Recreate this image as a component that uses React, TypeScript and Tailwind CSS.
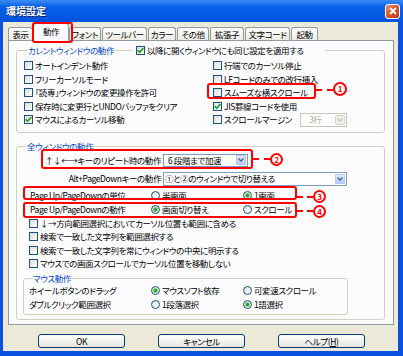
import React from "react";

function Check({ checked }: { checked?: boolean }) {
  return (
    <span className="w-[9px] h-[9px] shrink-0 border border-[#1C5180] bg-linear-to-br from-[#DCDCD7] to-white flex items-center justify-center">
      {checked && (
        <svg width="7" height="7" viewBox="0 0 7 7">
          <path d="M0.7 3.2 L2.6 5.3 L6.4 1.2" stroke="#21A121" strokeWidth="1.7" fill="none" />
        </svg>
      )}
    </span>
  );
}

function Radio({ checked }: { checked?: boolean }) {
  return (
    <span className="w-[9px] h-[9px] shrink-0 rounded-full border border-[#1C5180] bg-linear-to-br from-[#DCDCD7] to-white flex items-center justify-center">
      {checked && <span className="w-[3px] h-[3px] rounded-full bg-[#21A121] ring-1 ring-[#7FD07F]" />}
    </span>
  );
}

function CB({ checked, children }: { checked?: boolean; children: React.ReactNode }) {
  return (
    <div className="flex items-center gap-[2px] whitespace-nowrap">
      <Check checked={checked} />
      <span>{children}</span>
    </div>
  );
}

function RB({ checked, children }: { checked?: boolean; children: React.ReactNode }) {
  return (
    <div className="flex items-center gap-[2px] whitespace-nowrap">
      <Radio checked={checked} />
      <span>{children}</span>
    </div>
  );
}

function DropBtn({ disabled }: { disabled?: boolean }) {
  return (
    <span
      className={
        disabled
          ? "w-[10px] h-[10px] shrink-0 rounded-[1px] border border-[#D8D6CB] bg-[#F1EFE6] flex items-center justify-center"
          : "w-[10px] h-[10px] shrink-0 rounded-[1px] border border-[#B4C8F5] bg-linear-to-b from-[#E3ECFE] to-[#B2CBF8] flex items-center justify-center"
      }
    >
      <svg width="6" height="4" viewBox="0 0 6 4">
        <path d="M0.5 0.5 L3 3 L5.5 0.5" stroke={disabled ? "#C9C7BA" : "#4D6185"} strokeWidth="1.4" fill="none" />
      </svg>
    </span>
  );
}

function Tab({ w, children, selected }: { w: string; children: React.ReactNode; selected?: boolean }) {
  if (selected) {
    return (
      <div className={`${w} h-[18px] -mb-[1px] relative z-10 border border-b-0 border-[#919B9C] rounded-t-[3px] bg-[#FCFCFE] flex items-center justify-center pb-[2px] whitespace-nowrap`}>
        {children}
      </div>
    );
  }
  return (
    <div className={`${w} h-[13px] border border-b-0 border-[#919B9C] rounded-t-[3px] bg-linear-to-b from-white to-[#ECEBE6] flex items-center justify-center whitespace-nowrap`}>
      {children}
    </div>
  );
}

function XPButton({ children }: { children: React.ReactNode }) {
  return (
    <div className="w-[87px] h-[14px] rounded-[3px] border border-[#003C74] bg-linear-to-b from-white to-[#E6E5DE] flex items-center justify-center">
      {children}
    </div>
  );
}

function Circle({ n }: { n: string }) {
  return (
    <span className="w-full h-full rounded-full border-2 border-[#F00] bg-white flex items-center justify-center text-[#F00] font-bold text-[8px] leading-[8px] tracking-normal">
      {n}
    </span>
  );
}

export default function App() {
  return (
    <div className="relative w-[403px] h-[356px] flex flex-col bg-[#0A4FDF] font-['Noto_Sans_CJK_JP',sans-serif] text-[8.5px] leading-[9px] tracking-[-0.4px] text-black [font-feature-settings:'palt'] overflow-hidden">
      {/* Title bar */}
      <div className="h-[22px] shrink-0 flex items-center justify-between pl-[6px] pr-[3px] bg-linear-to-b from-[#3A8CF6] via-[#0861EA] via-30% to-[#0453DE]">
        <span className="text-white font-bold text-[10px] leading-[10px] tracking-normal [text-shadow:1px_1px_0_#0A1E6E]">環境設定</span>
        <span className="w-[15px] h-[15px] rounded-[3px] border border-white bg-linear-to-br from-[#E88A6A] via-[#D9532F] to-[#C13A18] flex items-center justify-center">
          <svg width="8" height="8" viewBox="0 0 8 8">
            <path d="M1 1 L7 7 M7 1 L1 7" stroke="white" strokeWidth="1.8" />
          </svg>
        </span>
      </div>

      {/* Body */}
      <div className="flex-1 ml-[3px] mr-[5px] mb-[5px] bg-[#ECE9D8] flex flex-col">
        {/* Tabs */}
        <div className="h-[18px] shrink-0 pl-[5px] flex items-end">
          <Tab w="w-[25px]">表示</Tab>
          <Tab w="w-[36px]" selected>動作</Tab>
          <Tab w="w-[32px]">フォント</Tab>
          <div className="w-[1px]" />
          <Tab w="w-[45px]">ツールバー</Tab>
          <div className="w-[1px]" />
          <Tab w="w-[28px]">カラー</Tab>
          <div className="w-[1px]" />
          <Tab w="w-[32px]">その他</Tab>
          <div className="w-[1px]" />
          <Tab w="w-[34px]">拡張子</Tab>
          <div className="w-[1px]" />
          <Tab w="w-[45px]">文字コード</Tab>
          <div className="w-[1px]" />
          <Tab w="w-[27px]">起動</Tab>
        </div>

        {/* Panel */}
        <div className="ml-[5px] w-[386px] h-[285px] shrink-0 border border-[#919B9C] bg-[#FCFCFE] flex flex-col">
          {/* Group 1 */}
          <fieldset className="relative m-0 ml-[7px] mt-[5px] w-[369px] border border-[#D0D0BF] rounded-[3px] p-0 pt-[4px] pb-[5px] pl-[7px]">
            <legend className="ml-[3px] px-[1px] text-[#0046D5] leading-[9px]">カレントウィンドウの動作</legend>
            <div className="absolute top-[-9px] left-[115px] w-[193px] h-[9px] bg-[#FCFCFE] pl-[4px] flex items-center">
              <CB checked>以降に開くウィンドウにも同じ設定を適用する</CB>
            </div>
            <div className="grid grid-cols-[189px_1fr] auto-rows-[13.5px] items-center">
              <CB>オートインデント動作</CB>
              <CB>行端でのカーソル停止</CB>
              <CB>フリーカーソルモード</CB>
              <CB>LFコードのみでの改行挿入</CB>
              <CB>「読専」ウィンドウの変更操作を許可</CB>
              <CB>スムーズな横スクロール</CB>
              <CB>保存時に変更行とUNDOバッファをクリア</CB>
              <CB checked>JIS罫線コードを使用</CB>
              <CB checked>マウスによるカーソル移動</CB>
              <div className="flex items-center">
                <div className="w-[87px] shrink-0">
                  <CB>スクロールマージン</CB>
                </div>
                <div className="w-[47px] h-[14px] border border-[#C9C7BA] bg-white flex items-center pl-[8px] pr-[1px] text-[#ACA899]">
                  <span className="flex-1">3行</span>
                  <DropBtn disabled />
                </div>
              </div>
            </div>
          </fieldset>

          {/* Group 2 */}
          <fieldset className="m-0 ml-[7px] mt-[9px] w-[369px] border border-[#D0D0BF] rounded-[3px] p-0 pt-[3px] pb-[4px] pl-[6px]">
            <legend className="ml-[3px] px-[1px] text-[#0046D5] leading-[9px]">全ウィンドウの動作</legend>
            <div className="h-[13px] flex items-center">
              <span className="w-[140px] shrink-0 text-right pr-[2px] whitespace-nowrap">↑↓←→キーのリピート時の動作</span>
              <div className="w-[85px] h-[13px] border border-[#7F9DB9] bg-white flex items-center pl-[4px] pr-[1px]">
                <span className="flex-1 whitespace-nowrap">6 段階まで加速</span>
                <DropBtn />
              </div>
            </div>
            <div className="h-[14px] mt-[5px] flex items-center">
              <span className="w-[140px] shrink-0 text-right pr-[2px] whitespace-nowrap">Alt+PageDownキーの動作</span>
              <div className="w-[184px] h-[14px] border border-[#7F9DB9] bg-white flex items-center pl-[1px] pr-[1px]">
                <span className="flex-1 whitespace-nowrap">①と②のウィンドウで切り替える</span>
                <DropBtn />
              </div>
            </div>
            <div className="mt-[3px] pl-[7px] grid grid-cols-[121px_92px_1fr] auto-rows-[14px] items-center whitespace-nowrap">
              <span>Page Up/PageDownの単位</span>
              <RB>半画面</RB>
              <RB checked>1画面</RB>
              <span>Page Up/PageDownの動作</span>
              <RB checked>画面切り替え</RB>
              <RB>スクロール</RB>
            </div>
            <div className="pl-[6px] grid auto-rows-[13.5px] items-center">
              <CB>↓→方向範囲選択においてカーソル位置も範囲に含める</CB>
              <CB>検索で一致した文字列を範囲選択する</CB>
              <CB>検索で一致した文字列を常にウィンドウの中央に明示する</CB>
              <CB>マウスでの画面スクロールでカーソル位置を移動しない</CB>
            </div>
            {/* Group 3 */}
            <fieldset className="m-0 mt-[3.5px] w-[325px] border border-[#D0D0BF] rounded-[3px] p-0 pb-[3px] pl-[5px]">
              <legend className="ml-[3px] px-[1px] text-[#0046D5] leading-[9px]">マウス動作</legend>
              <div className="grid grid-cols-[122px_92px_1fr] auto-rows-[14px] items-center whitespace-nowrap">
                <span>ホイールボタンのドラッグ</span>
                <RB checked>マウスソフト依存</RB>
                <RB>可変速スクロール</RB>
                <span>ダブルクリック範囲選択</span>
                <RB>1段落選択</RB>
                <RB checked>1語選択</RB>
              </div>
            </fieldset>
          </fieldset>
        </div>

        {/* Buttons */}
        <div className="mt-[9px] pl-[35px] flex gap-[33px]">
          <XPButton>OK</XPButton>
          <XPButton>キャンセル</XPButton>
          <XPButton>
            <span>
              ヘルプ(<span className="underline">H</span>)
            </span>
          </XPButton>
        </div>
      </div>

      {/* Annotations */}
      <div className="absolute left-[32px] top-[22px] w-[41px] h-[21px] border-2 border-[#F00] rounded-[3px] z-20" />

      <div className="absolute left-[207px] top-[83px] w-[109px] h-[16px] border-2 border-[#F00] rounded-[3px] z-20" />
      <div className="absolute left-[316px] top-[89px] w-[17px] border-t-2 border-dashed border-[#F00] z-20" />
      <div className="absolute left-[333px] top-[82px] w-[14px] h-[14px] z-20"><Circle n="1" /></div>

      <div className="absolute left-[41px] top-[149px] w-[212px] h-[20px] border-2 border-[#F00] rounded-[3px] z-20" />
      <div className="absolute left-[253px] top-[158px] w-[17px] border-t-2 border-dashed border-[#F00] z-20" />
      <div className="absolute left-[270px] top-[153px] w-[13px] h-[13px] z-20"><Circle n="2" /></div>

      <div className="absolute left-[23px] top-[186px] w-[274px] h-[14px] border-2 border-[#F00] rounded-[3px] z-20" />
      <div className="absolute left-[297px] top-[196px] w-[16px] border-t-2 border-dashed border-[#F00] z-20" />
      <div className="absolute left-[313px] top-[190px] w-[13px] h-[13px] z-20"><Circle n="3" /></div>

      <div className="absolute left-[23px] top-[202px] w-[274px] h-[16px] border-2 border-[#F00] rounded-[3px] z-20" />
      <div className="absolute left-[297px] top-[210px] w-[16px] border-t-2 border-dashed border-[#F00] z-20" />
      <div className="absolute left-[313px] top-[205px] w-[13px] h-[13px] z-20"><Circle n="4" /></div>
    </div>
  );
}
